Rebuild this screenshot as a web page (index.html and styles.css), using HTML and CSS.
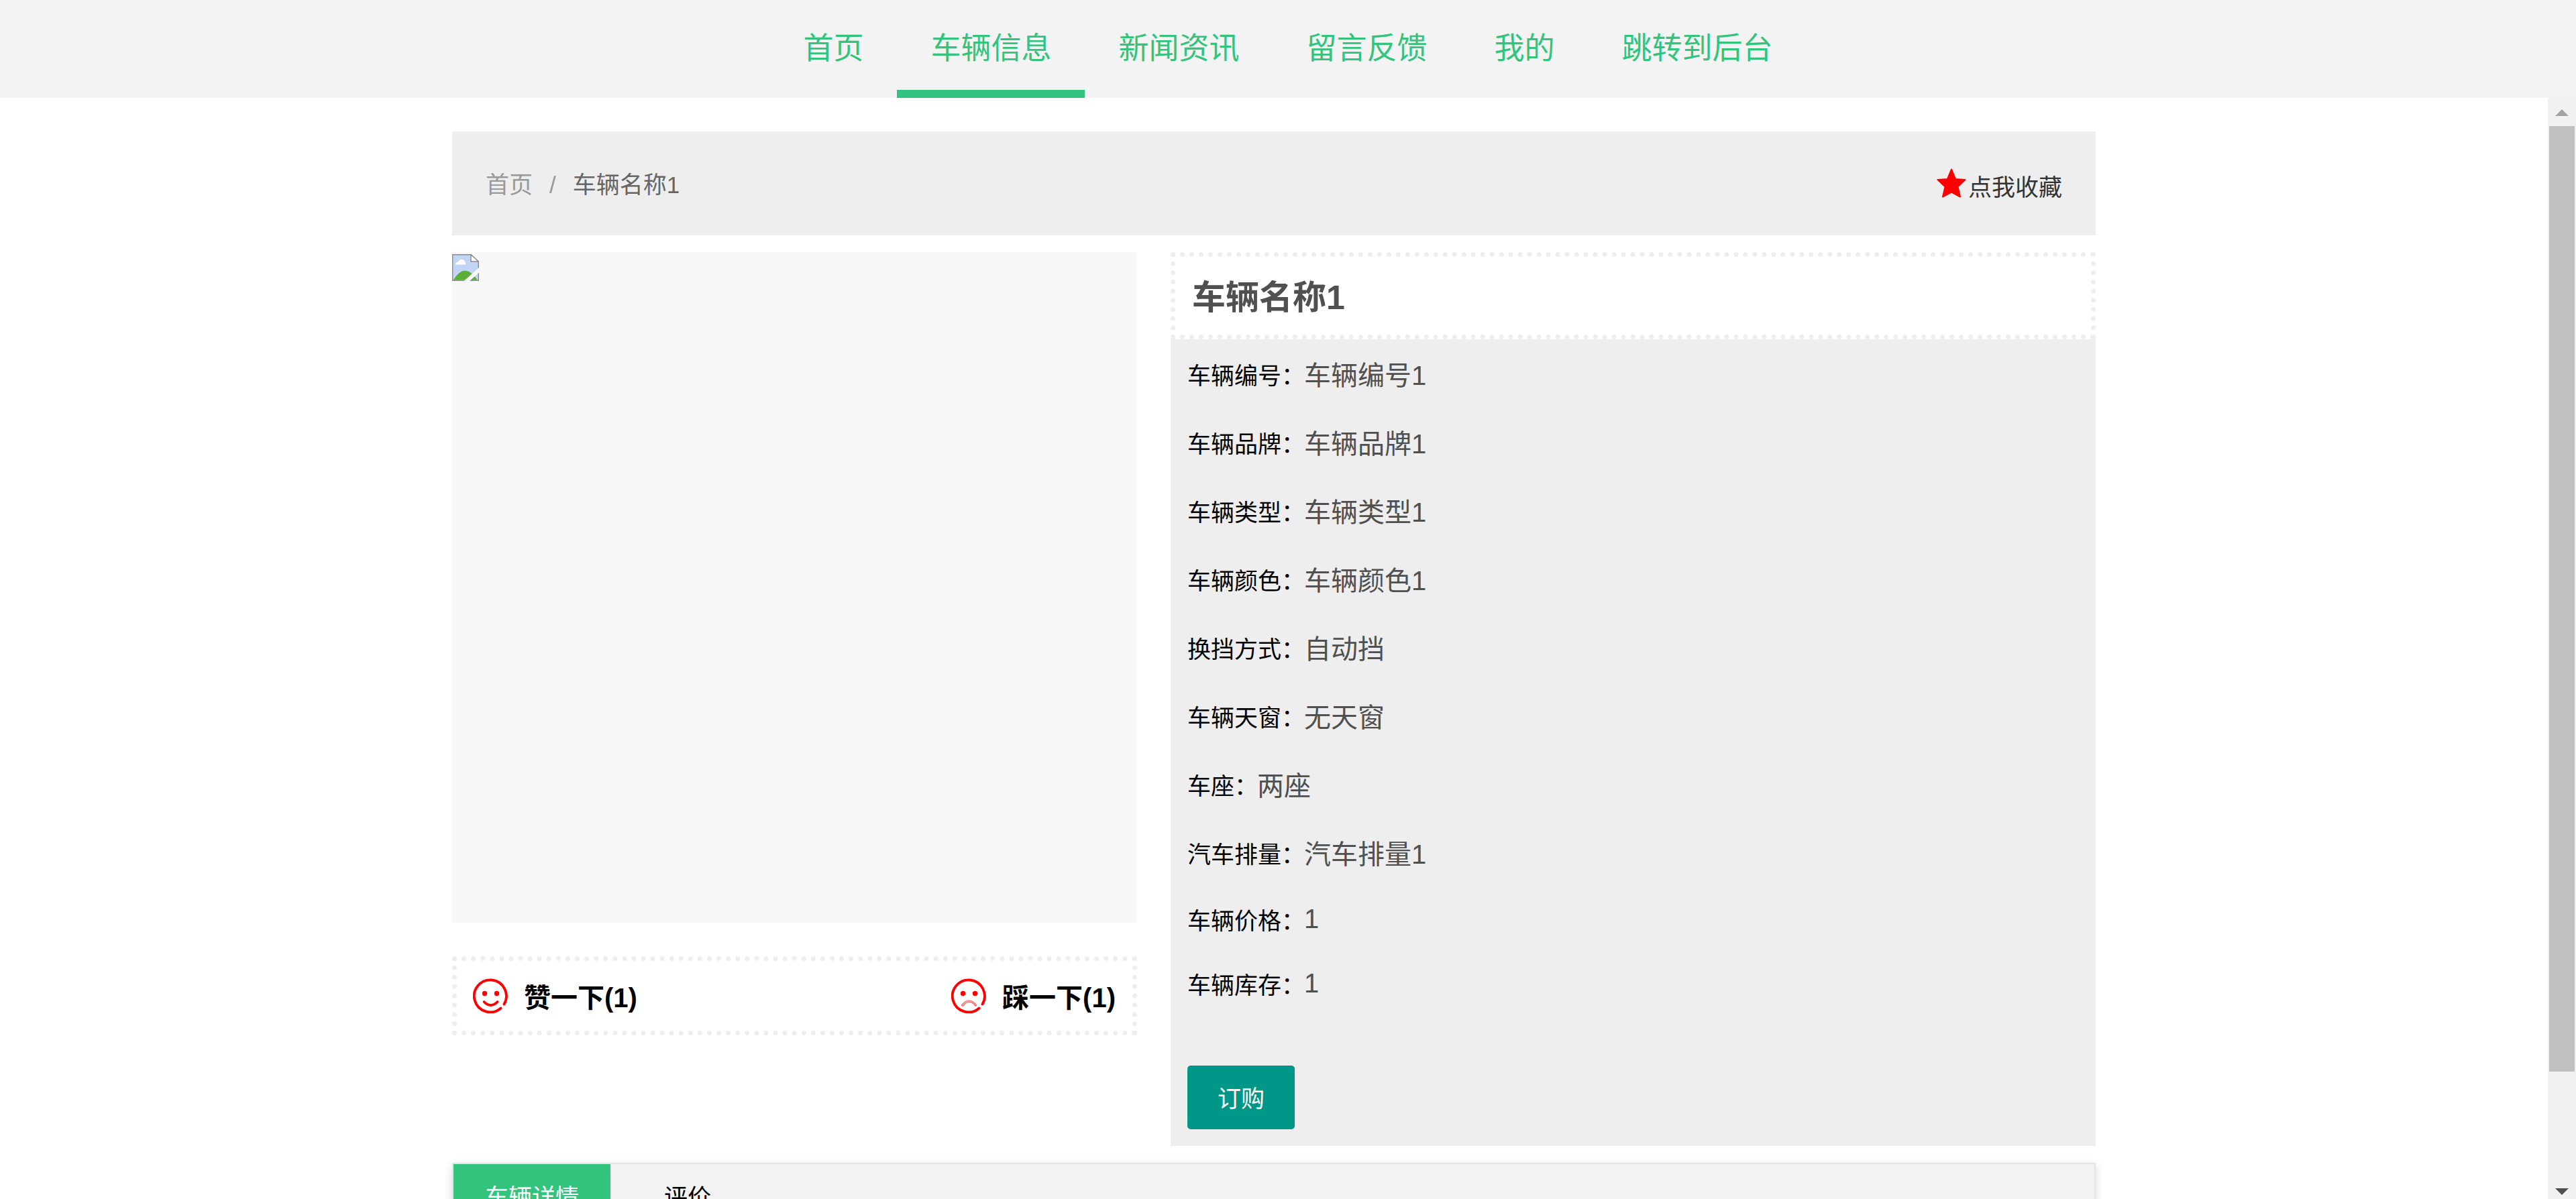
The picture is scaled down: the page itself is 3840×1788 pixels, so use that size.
FILE: index.html
```html
<!DOCTYPE html>
<html lang="zh-CN">
<head>
    <meta charset="UTF-8">
    <meta name="viewport" content="width=device-width, initial-scale=1.0">
    <title>车辆信息</title>
    <link rel="stylesheet" href="styles.css">
</head>
<body>
    <nav class="navbar">
        <a class="nav-item">首页</a>
        <a class="nav-item active">车辆信息</a>
        <a class="nav-item">新闻资讯</a>
        <a class="nav-item">留言反馈</a>
        <a class="nav-item">我的</a>
        <a class="nav-item">跳转到后台</a>
    </nav>

    <div class="frame">
        <main class="page">
            <div class="container">
                <div class="breadcrumb">
                    <div class="crumbs">
                        <a>首页</a>
                        <span>/</span>
                        <span class="current">车辆名称1</span>
                    </div>
                    <div class="favorite">
                        <svg class="star" viewBox="0 0 44 44">
                            <path d="M22 1.5L28 16L42.5 17L31.5 27.5L35 42.5L22 35.5L9 42.5L12.500 27.500L1.500 17L16 16Z" fill="#f00" stroke="#f00" stroke-width="2" stroke-linejoin="round"/>
                        </svg>
                        <span>点我收藏</span>
                    </div>
                </div>

                <div class="detail">
                    <div class="detail-left">
                        <div class="gallery">
                            <svg class="broken" viewBox="0 0 40 40">
                                <path d="M.7 .7H28L39.300 11V39.300H.7Z" fill="#c3d5f6" stroke="#8c8c8c" stroke-width="1.400"/>
                                <path d="M5 15.500Q4.500 12 9 11.500Q12 6.500 16 8Q20 10 20 15.500Z" fill="#fff"/>
                                <path d="M2 38.500Q10 25 19 24.500Q29 25 37.500 38.500Z" fill="#5bad3a"/>
                                <path d="M28 .7V11H39.300Z" fill="#fff" stroke="#8c8c8c" stroke-width="1.400"/>
                                <path d="M17 40.500L40.500 19.500V27L25.500 40.500Z" fill="#f8f8f8"/>
                            </svg>
                        </div>
                        <div class="votes">
                            <div class="vote">
                                <svg class="face" viewBox="0 0 52 52">
                                    <path d="M46.500 38.500A24 24 0 1 0 41.500 44.500" class="line"/>
                                    <circle cx="17.500" cy="22.500" r="3.700"/>
                                    <circle cx="35.500" cy="22.500" r="3.700"/>
                                    <path d="M16.500 35Q26.500 45 36.500 35" class="line"/>
                                </svg>
                                <span>赞一下(1)</span>
                            </div>
                            <div class="vote">
                                <svg class="face" viewBox="0 0 52 52">
                                    <path d="M46.500 38.500A24 24 0 1 0 41.500 44.500" class="line"/>
                                    <circle cx="17.500" cy="22.500" r="3.700"/>
                                    <circle cx="35.500" cy="22.500" r="3.700"/>
                                    <path d="M15.500 40Q26.500 26 37.500 40Q36.500 42 35.500 40.500Q26.500 30 18 40.500Q16.500 42 15.500 40Z" class="mouth"/>
                                </svg>
                                <span>踩一下(1)</span>
                            </div>
                        </div>
                    </div>

                    <div class="detail-right">
                        <h1 class="title">车辆名称1</h1>
                        <div class="info">
                            <div class="row"><label>车辆编号：</label><span>车辆编号1</span></div>
                            <div class="row"><label>车辆品牌：</label><span>车辆品牌1</span></div>
                            <div class="row"><label>车辆类型：</label><span>车辆类型1</span></div>
                            <div class="row"><label>车辆颜色：</label><span>车辆颜色1</span></div>
                            <div class="row"><label>换挡方式：</label><span>自动挡</span></div>
                            <div class="row"><label>车辆天窗：</label><span>无天窗</span></div>
                            <div class="row"><label>车座：</label><span>两座</span></div>
                            <div class="row"><label>汽车排量：</label><span>汽车排量1</span></div>
                            <div class="row number"><label>车辆价格：</label><span>1</span></div>
                            <div class="row number"><label>车辆库存：</label><span>1</span></div>
                            <button type="button" class="order-button">订购</button>
                        </div>
                    </div>
                </div>

                <div class="tabs">
                    <div class="tab active">车辆详情</div>
                    <div class="tab">评价</div>
                </div>
            </div>
        </main>

        <div class="scrollbar">
            <svg class="arrow" viewBox="0 0 20 10"><path d="M0 10L10 0L20 10Z" fill="#a3a3a3"/></svg>
            <div class="thumb"></div>
            <svg class="arrow" viewBox="0 0 20 10"><path d="M0 0L10 10L20 0Z" fill="#505050"/></svg>
        </div>
    </div>
</body>
</html>
```

FILE: styles.css
```css
* {
    box-sizing: border-box;
}
body {
    font-family: "Liberation Sans", "Noto Sans CJK SC", sans-serif;
    font-size: 35px;
    color: #000;
    background-color: #fff;
    margin: 0;
    height: 1788px;
    overflow: hidden;
    display: flex;
    flex-direction: column;
}
.navbar {
    flex: none;
    display: flex;
    justify-content: center;
    height: 146px;
    background-color: #f3f3f3;
}
.nav-item {
    padding: 0 50px;
    height: 146px;
    line-height: 145px;
    font-size: 45px;
    color: #32c47c;
}
.nav-item.active {
    border-bottom: 12px solid #32c47c;
}
.frame {
    flex: 1;
    min-height: 0;
    display: flex;
}
.page {
    flex: 1;
    overflow: hidden;
    padding-top: 50px;
}
.container {
    width: 2450px;
    margin: 0 auto;
}
.breadcrumb {
    display: flex;
    justify-content: space-between;
    align-items: center;
    height: 155px;
    padding: 0 50px;
    background-color: #eee;
}
.crumbs {
    display: flex;
    gap: 25px;
    line-height: 50px;
    padding-top: 5px;
    color: #999;
}
.crumbs .current {
    color: #666;
}
.favorite {
    display: flex;
    align-items: center;
    gap: 3px;
    line-height: 50px;
    padding-top: 4px;
    color: #333;
}
.favorite span {
    padding-top: 8px;
}
.star {
    width: 44px;
    height: 44px;
    margin-bottom: 6px;
}
.detail {
    display: flex;
    gap: 50px;
    margin-top: 25px;
}
.detail-left {
    width: 1021px;
}
.detail-right {
    flex: 1;
}
.gallery {
    height: 1000px;
    padding-top: 3px;
    background-color: #f8f8f8;
}
.broken {
    display: block;
    width: 40px;
    height: 40px;
}
.votes {
    display: flex;
    justify-content: space-between;
    align-items: center;
    height: 118px;
    margin-top: 50px;
    padding: 0 25px;
    border: 7px dotted #eee;
}
.vote {
    display: flex;
    align-items: center;
    gap: 24px;
    font-size: 40px;
    font-weight: bold;
}
.face {
    width: 52px;
    height: 52px;
    margin-left: -1px;
    fill: #f00;
}
.face .line {
    fill: none;
    stroke: #f00;
    stroke-width: 3.8;
    stroke-linecap: round;
}
.face .mouth {
    fill: #fdd;
    stroke: #f55;
    stroke-width: 1.2;
}
.title {
    height: 130px;
    margin: 0;
    padding: 0 25px;
    border: 7px dotted #eee;
    line-height: 122px;
    font-size: 50px;
    color: #505050;
}
.info {
    height: 1203px;
    padding: 0 25px;
    background-color: #eee;
}
.row {
    display: flex;
    align-items: center;
    height: 102px;
}
.row.number {
    height: 96px;
}
.row span {
    margin-left: -1px;
    font-size: 40px;
    color: #505050;
}
.order-button {
    display: block;
    width: 160px;
    height: 95px;
    margin-top: 75px;
    padding: 0 0 3px;
    border: none;
    border-radius: 5px;
    background-color: #009688;
    color: #fff;
    font-family: inherit;
    font-size: 35px;
}
.tabs {
    display: flex;
    height: 400px;
    margin-top: 25px;
    border: 2px solid #e4e4e4;
    background-color: #f2f2f2;
    box-shadow: 0 5px 12px rgba(0, 0, 0, 0.12), 0 0 15px rgba(0, 0, 0, 0.04);
}
.tab {
    height: 100px;
    margin-right: 33px;
    padding: 0 47px;
    line-height: 100px;
}
.tab.active {
    background-color: #32c47c;
    color: #fff;
}
.scrollbar {
    display: flex;
    flex-direction: column;
    align-items: center;
    width: 42px;
    padding: 17px 0 6px;
    background-color: #f1f1f1;
}
.arrow {
    width: 20px;
    height: 10px;
}
.thumb {
    width: 38px;
    height: 1410px;
    margin: 15px 0 174px;
    background-color: #c1c1c1;
}
```
